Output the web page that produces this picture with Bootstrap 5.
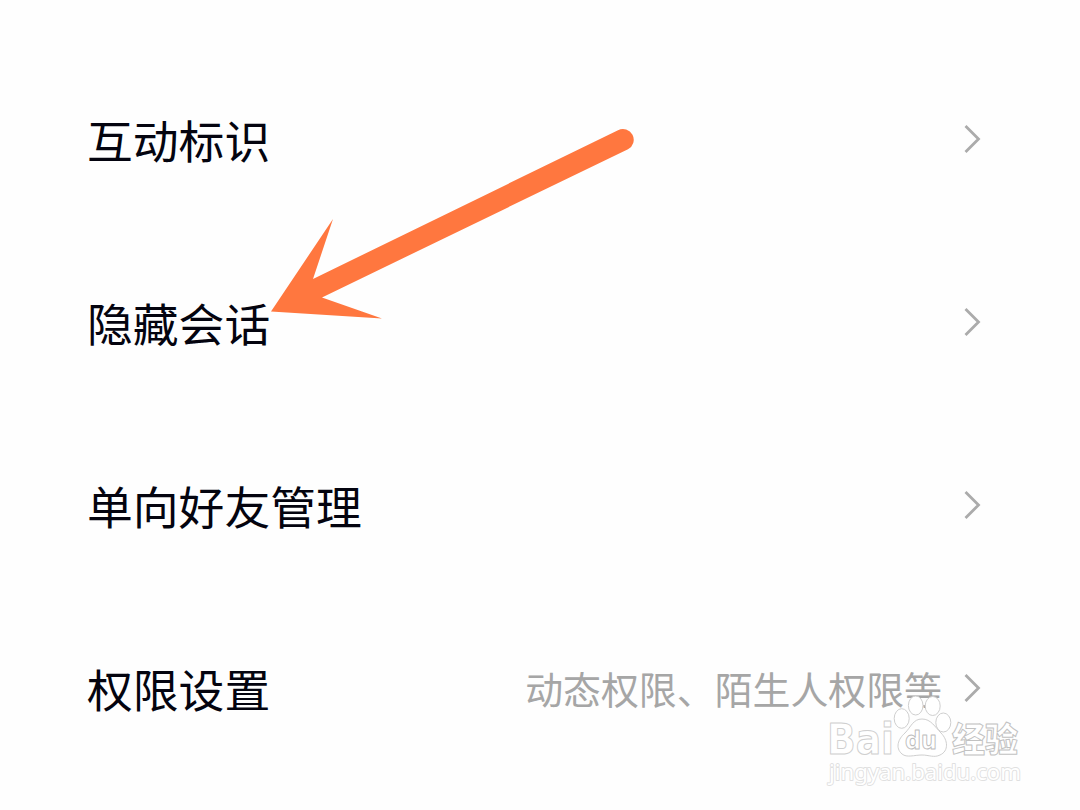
<!DOCTYPE html>
<html lang="zh-CN">
<head>
<meta charset="utf-8">
<meta name="viewport" content="width=device-width, initial-scale=1">
<title>设置</title>
<link href="https://cdn.jsdelivr.net/npm/bootstrap@5.3.0/dist/css/bootstrap.min.css" rel="stylesheet">
<style>
  body { font-family: "Noto Sans CJK SC", sans-serif; background: #fefefe; height: 810px; overflow: hidden; }
  .settings { padding: 47px 98px 0 87px; }
  .setting-row { height: 183px; background: transparent; }
  .setting-name { font-size: 45.8px; line-height: 60px; color: #04040f; padding-top: 1px; }
  .setting-value { font-size: 37.9px; line-height: 50px; color: #a6a6a6; padding-top: 1px; margin-right: 22px; }
  .chevron { width: 18px; height: 30px; fill: none; stroke: #ababab; stroke-width: 2.8; }
  .pointer, .watermark { pointer-events: none; }
</style>
</head>
<body class="position-relative">
<main class="settings list-group list-group-flush">
  <div class="setting-row list-group-item border-0 p-0 d-flex align-items-center justify-content-between">
    <span class="setting-name">互动标识</span>
    <svg class="chevron" viewBox="0 0 18 30"><path d="M1.500 2 14.500 15 1.500 28"/></svg>
  </div>
  <div class="setting-row list-group-item border-0 p-0 d-flex align-items-center justify-content-between">
    <span class="setting-name">隐藏会话</span>
    <svg class="chevron" viewBox="0 0 18 30"><path d="M1.500 2 14.500 15 1.500 28"/></svg>
  </div>
  <div class="setting-row list-group-item border-0 p-0 d-flex align-items-center justify-content-between">
    <span class="setting-name">单向好友管理</span>
    <svg class="chevron" viewBox="0 0 18 30"><path d="M1.500 2 14.500 15 1.500 28"/></svg>
  </div>
  <div class="setting-row list-group-item border-0 p-0 d-flex align-items-center">
    <span class="setting-name">权限设置</span>
    <span class="setting-value ms-auto">动态权限、陌生人权限等</span>
    <svg class="chevron" viewBox="0 0 18 30"><path d="M1.500 2 14.500 15 1.500 28"/></svg>
  </div>
</main>

<svg class="pointer position-absolute top-0 start-0" width="1080" height="810" viewBox="0 0 1080 810">
  <path fill="#ff773f" d="M271 311.500 333 219 313 279 618 130.200A10.600 10.600 0 0 1 628 149.200L322 297.500 382 318.500Z"/>
</svg>

<svg class="watermark position-absolute top-0 start-0" width="1080" height="810" viewBox="0 0 1080 810">
  <g fill="#fff" stroke="#cfcfcf" stroke-width="1" stroke-linejoin="round">
    <text x="827" y="754" textLength="67" lengthAdjust="spacingAndGlyphs" font-family="DejaVu Sans, sans-serif" font-weight="700" font-size="42">Bai</text>
    <ellipse cx="901.700" cy="718.500" rx="7.500" ry="9.800"/>
    <ellipse cx="915.700" cy="705.500" rx="7.300" ry="9.500"/>
    <ellipse cx="932.700" cy="706" rx="7.500" ry="9.500"/>
    <ellipse cx="943.300" cy="722.500" rx="7.500" ry="9.500"/>
    <path d="M922 719C931 719 935 727 941 733C948 740 949 751 940 755C934 758 929 755 922 755C914 755 907 758 902 754C895 748 898 739 905 733C911 727 913 719 922 719Z"/>
    <text x="905" y="749" textLength="32" lengthAdjust="spacingAndGlyphs" font-family="DejaVu Sans, sans-serif" font-weight="700" font-size="25" stroke="#bcbcbc">du</text>
    <text x="952" y="752" textLength="66" lengthAdjust="spacingAndGlyphs" font-family="Noto Sans CJK SC, sans-serif" font-weight="900" font-size="34" stroke="#c2c2c2">经验</text>
    <text x="829" y="780" textLength="192" lengthAdjust="spacingAndGlyphs" font-family="Noto Sans, sans-serif" font-size="22" stroke="#e0e0e0" stroke-width="1.800" paint-order="stroke">jingyan.baidu.com</text>
  </g>
</svg>
<script src="https://cdn.jsdelivr.net/npm/bootstrap@5.3.0/dist/js/bootstrap.bundle.min.js"></script>
</body>
</html>
